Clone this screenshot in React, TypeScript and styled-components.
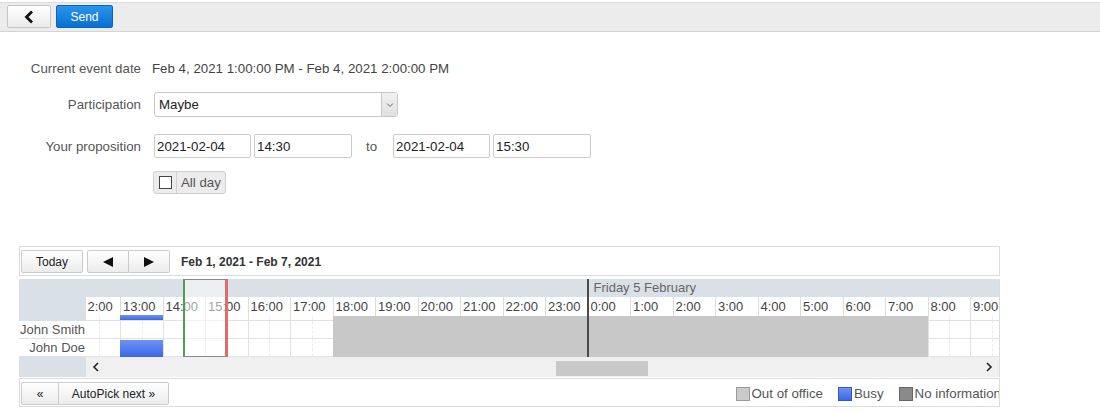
import React from "react";
import styled, { createGlobalStyle } from "styled-components";

const GlobalStyle = createGlobalStyle`
  html, body { margin: 0; padding: 0; background: #fff; }
  body { font-family: "Liberation Sans", Arial, sans-serif; font-size: 13px; color: #333; }
  * { box-sizing: border-box; }
`;

const HOUR_W = 42.5;
const hours = [
  "2:00", "13:00", "14:00", "15:00", "16:00", "17:00", "18:00", "19:00", "20:00", "21:00", "22:00",
  "23:00", "0:00", "1:00", "2:00", "3:00", "4:00", "5:00", "6:00", "7:00", "8:00", "9:00",
];

/* ---------- top bar ---------- */
const TopBar = styled.div`
  margin-top: 2px;
  height: 30px;
  border-top: 1px solid #dcdcdc;
  border-bottom: 1px solid #d4d4d4;
  background: #ececec;
  display: flex;
  align-items: flex-start;
  gap: 5px;
  padding: 2px 7px 0;
`;

const BarButton = styled.button<{ $primary?: boolean; $w: number }>`
  width: ${(p) => p.$w}px;
  height: 23px;
  padding: 0;
  margin: 0;
  display: flex;
  align-items: center;
  justify-content: center;
  font-family: "Liberation Sans", Arial, sans-serif;
  font-size: 12px;
  border-radius: 2px;
  border: 1px solid ${(p) => (p.$primary ? "#0b64bd" : "#c6c6c6")};
  color: ${(p) => (p.$primary ? "#fff" : "#111")};
  background: ${(p) =>
    p.$primary ? "linear-gradient(#2a95ec, #0a6fd2)" : "linear-gradient(#ffffff, #ebebeb)"};
`;

/* ---------- form ---------- */
const Form = styled.div`
  display: flex;
  flex-direction: column;
  font-size: 13.3px;
`;

const FormRow = styled.div<{ $top: number; $h: number }>`
  display: flex;
  align-items: center;
  margin-top: ${(p) => p.$top}px;
  height: ${(p) => p.$h}px;
`;

const Label = styled.div`
  width: 141px;
  text-align: right;
  color: #555;
  margin-right: 13px;
  white-space: nowrap;
`;

const ValueText = styled.div`
  margin-left: -2px;
  color: #444;
`;

const SelectBox = styled.div`
  width: 244px;
  height: 25px;
  border: 1px solid #c8c8c8;
  border-radius: 3px;
  display: flex;
  align-items: stretch;
  background: #fff;
  overflow: hidden;
`;

const SelectText = styled.div`
  flex: 1;
  padding-left: 4px;
  display: flex;
  align-items: center;
  color: #222;
`;

const SelectArrow = styled.div`
  width: 16px;
  border-left: 1px solid #c8c8c8;
  background: linear-gradient(#f0f0f0, #e0e0e0);
  display: flex;
  align-items: center;
  justify-content: center;
`;

const Field = styled.input<{ $w: number }>`
  width: ${(p) => p.$w}px;
  height: 24px;
  border: 1px solid #cccccc;
  border-radius: 2px;
  padding: 0 2px;
  margin: 0 3px 0 0;
  font-family: "Liberation Sans", Arial, sans-serif;
  font-size: 13.3px;
  color: #222;
  outline: none;
`;

const ToWord = styled.span`
  color: #555;
  margin: 0 16px 0 11px;
`;

const CheckButton = styled.div`
  margin-left: -1px;
  width: 73px;
  height: 23px;
  border: 1px solid #cfcfcf;
  border-radius: 3px;
  background: #ececec;
  display: flex;
  align-items: stretch;
`;

const CheckPart = styled.div`
  width: 23px;
  border-right: 1px solid #d2d2d2;
  display: flex;
  align-items: center;
  justify-content: center;
`;

const CheckSquare = styled.div`
  width: 13px;
  height: 13px;
  border: 1px solid #444;
  background: #fff;
`;

const CheckLabel = styled.div`
  padding-left: 4px;
  display: flex;
  align-items: center;
  color: #555;
`;

/* ---------- calendar ---------- */
const Calendar = styled.div`
  margin: 52px 0 0 19px;
  width: 981px;
`;

const CalToolbar = styled.div`
  height: 30px;
  border: 1px solid #dcdcdc;
  display: flex;
  align-items: flex-start;
  padding: 3px 1px 0;
  overflow: hidden;
`;

const ToolButton = styled.div<{ $w: number; $joinLeft?: boolean; $joinRight?: boolean }>`
  width: ${(p) => p.$w}px;
  height: 23px;
  display: flex;
  align-items: center;
  justify-content: center;
  font-size: 12px;
  color: #222;
  border: 1px solid #cbcbcb;
  border-left-width: ${(p) => (p.$joinLeft ? 0 : 1)}px;
  border-radius: ${(p) =>
    p.$joinLeft ? "0 2px 2px 0" : p.$joinRight ? "2px 0 0 2px" : "2px"};
  background: linear-gradient(#ffffff, #ececec);
  flex: none;
`;

const ButtonGroup = styled.div<{ $ml: number }>`
  display: flex;
  margin-left: ${(p) => p.$ml}px;
`;

const RangeTitle = styled.div`
  margin-left: 11px;
  height: 23px;
  display: flex;
  align-items: center;
  font-weight: bold;
  font-size: 12px;
  color: #333;
`;

const Grid = styled.div`
  margin-top: 3px;
  display: grid;
  grid-template-columns: 67px 913px;
  border-right: 1px solid #dcdcdc;
`;

const LeftCol = styled.div`
  display: flex;
  flex-direction: column;
`;

const LeftBlock = styled.div<{ $h: number }>`
  height: ${(p) => p.$h}px;
  background: #d9e0e7;
`;

const NameCell = styled.div`
  height: 18px;
  background: #fff;
  border-bottom: 1px solid #e2e2e2;
  text-align: right;
  padding-right: 1px;
  line-height: 17px;
  color: #555;
  font-size: 13px;
  white-space: nowrap;
`;

const RightCol = styled.div`
  display: flex;
  flex-direction: column;
`;

const Viewport = styled.div`
  height: 78px;
  overflow: hidden;
  position: relative;
`;

const Track = styled.div`
  position: relative;
  width: ${HOUR_W * hours.length}px;
  margin-left: -8.5px;
`;

const DayRow = styled.div`
  display: flex;
  height: 18px;
  background: #d9e0e7;
`;

const DayCell = styled.div<{ $w: number }>`
  width: ${(p) => p.$w}px;
  padding-left: 6px;
  line-height: 18px;
  color: #666;
  font-size: 13px;
  white-space: nowrap;
`;

const HourRow = styled.div`
  display: flex;
  height: 19px;
`;

const HourCell = styled.div<{ $lead?: boolean }>`
  width: ${HOUR_W}px;
  flex: none;
  border-left: 1px solid #dcdcdc;
  padding-left: ${(p) => (p.$lead ? 9 : 2)}px;
  line-height: 19px;
  color: #444;
  font-size: 13px;
  white-space: nowrap;
  overflow: hidden;
  background: #fff;
`;

const SlotRow = styled.div<{ $h: number }>`
  display: flex;
  height: ${(p) => p.$h}px;
  border-bottom: 1px solid #e2e2e2;
`;

const SlotCell = styled.div`
  width: ${HOUR_W}px;
  flex: none;
  border-left: 1px solid #e2e2e2;
  position: relative;
  &::after {
    content: "";
    position: absolute;
    top: 0;
    bottom: 0;
    left: 50%;
    border-left: 1px dashed #ececec;
  }
`;

const Block = styled.div<{ $left: number; $top: number; $w: number; $h: number; $kind: "out" | "busy" }>`
  position: absolute;
  left: ${(p) => p.$left}px;
  top: ${(p) => p.$top}px;
  width: ${(p) => p.$w}px;
  height: ${(p) => p.$h}px;
  background: ${(p) => (p.$kind === "out" ? "#c8c8c8" : "linear-gradient(#6f93f2, #3a67e8)")};
`;

const DayDivider = styled.div<{ $left: number }>`
  position: absolute;
  left: ${(p) => p.$left}px;
  top: 0;
  width: 2px;
  height: 78px;
  background: #4a4a4a;
`;

const Selection = styled.div<{ $left: number; $w: number }>`
  position: absolute;
  left: ${(p) => p.$left}px;
  top: 0;
  width: ${(p) => p.$w}px;
  height: 78px;
  background: rgba(255, 255, 255, 0.5);
  border-left: 2px solid #4f9f4f;
  border-right: 3px solid #e46a6a;
  border-top: 1px solid #8a8a8a;
  border-bottom: 1px solid #8a8a8a;
`;

const ScrollRow = styled.div`
  height: 20px;
  background: #f0f0f0;
  position: relative;
  display: flex;
  align-items: center;
  justify-content: space-between;
  padding: 0 6px 0 6px;
`;

const ScrollThumb = styled.div<{ $left: number; $w: number }>`
  position: absolute;
  top: 4px;
  left: ${(p) => p.$left}px;
  width: ${(p) => p.$w}px;
  height: 15px;
  background: #c8c8c8;
`;

const BottomBar = styled.div`
  margin-top: 1px;
  height: 29px;
  border: 1px solid #dcdcdc;
  display: flex;
  align-items: flex-start;
  padding: 3px 0 0 1px;
  overflow: hidden;
`;

const Legend = styled.div`
  margin-left: auto;
  height: 23px;
  display: flex;
  align-items: center;
  white-space: nowrap;
  margin-right: -2px;
`;

const LegendItem = styled.div`
  display: flex;
  align-items: center;
  margin-left: 15px;
  color: #555;
  font-size: 13.3px;
`;

const Swatch = styled.span<{ $bg: string; $bd: string }>`
  width: 14px;
  height: 14px;
  margin-right: 2px;
  background: ${(p) => p.$bg};
  border: 1px solid ${(p) => p.$bd};
`;

const ChevronLeft = () => (
  <svg width="12" height="14" viewBox="0 0 12 14">
    <path d="M9 1.5 L3.5 7 L9 12.5" fill="none" stroke="#111" strokeWidth="2.8" />
  </svg>
);

const TriLeft = () => (
  <svg width="10" height="10" viewBox="0 0 10 10">
    <path d="M0 5 L10 0 L10 10 Z" fill="#111" />
  </svg>
);
const TriRight = () => (
  <svg width="10" height="10" viewBox="0 0 10 10">
    <path d="M10 5 L0 0 L0 10 Z" fill="#111" />
  </svg>
);

const SmallChevron = ({ dir }: { dir: "left" | "right" | "down" }) => {
  const d =
    dir === "left" ? "M6 1 L2 5 L6 9" : dir === "right" ? "M2 1 L6 5 L2 9" : "M1 2.5 L4 5.5 L7 2.5";
  const vb = dir === "down" ? "0 0 8 8" : "0 0 8 10";
  return (
    <svg width="8" height={dir === "down" ? 8 : 10} viewBox={vb}>
      <path d={d} fill="none" stroke={dir === "down" ? "#666" : "#222"} strokeWidth={dir === "down" ? 1 : 1.6} />
    </svg>
  );
};

export default function App() {
  return (
    <>
      <GlobalStyle />
      <TopBar>
        <BarButton $w={44}>
          <ChevronLeft />
        </BarButton>
        <BarButton $w={57} $primary>
          Send
        </BarButton>
      </TopBar>

      <Form>
        <FormRow $top={24} $h={24}>
          <Label>Current event date</Label>
          <ValueText>Feb 4, 2021 1:00:00 PM - Feb 4, 2021 2:00:00 PM</ValueText>
        </FormRow>
        <FormRow $top={12} $h={25}>
          <Label>Participation</Label>
          <SelectBox>
            <SelectText>Maybe</SelectText>
            <SelectArrow>
              <SmallChevron dir="down" />
            </SelectArrow>
          </SelectBox>
        </FormRow>
        <FormRow $top={17} $h={24}>
          <Label>Your proposition</Label>
          <Field $w={97} defaultValue="2021-02-04" />
          <Field $w={98} defaultValue="14:30" />
          <ToWord>to</ToWord>
          <Field $w={97} defaultValue="2021-02-04" />
          <Field $w={98} defaultValue="15:30" />
        </FormRow>
        <FormRow $top={13} $h={23}>
          <Label />
          <CheckButton>
            <CheckPart>
              <CheckSquare />
            </CheckPart>
            <CheckLabel>All day</CheckLabel>
          </CheckButton>
        </FormRow>
      </Form>

      <Calendar>
        <CalToolbar>
          <ToolButton $w={62}>Today</ToolButton>
          <ButtonGroup $ml={4}>
            <ToolButton $w={42} $joinRight>
              <TriLeft />
            </ToolButton>
            <ToolButton $w={41} $joinLeft>
              <TriRight />
            </ToolButton>
          </ButtonGroup>
          <RangeTitle>Feb 1, 2021 - Feb 7, 2021</RangeTitle>
        </CalToolbar>

        <Grid>
          <LeftCol>
            <LeftBlock $h={42} />
            <NameCell>John Smith</NameCell>
            <NameCell>John Doe</NameCell>
            <LeftBlock $h={20} />
          </LeftCol>
          <RightCol>
            <Viewport>
              <Track>
                <DayRow>
                  <DayCell $w={HOUR_W * 12} />
                  <DayCell $w={HOUR_W * 10}>Friday 5 February</DayCell>
                </DayRow>
                <HourRow>
                  {hours.map((h, i) => (
                    <HourCell key={i} $lead={i === 0}>
                      {h}
                    </HourCell>
                  ))}
                </HourRow>
                <SlotRow $h={5}>
                  {hours.map((h, i) => (
                    <SlotCell key={i} />
                  ))}
                </SlotRow>
                <SlotRow $h={18}>
                  {hours.map((h, i) => (
                    <SlotCell key={i} />
                  ))}
                </SlotRow>
                <SlotRow $h={18}>
                  {hours.map((h, i) => (
                    <SlotCell key={i} />
                  ))}
                </SlotRow>
                <Block $kind="out" $left={HOUR_W * 6} $top={37} $w={HOUR_W * 14} $h={41} />
                <Block $kind="busy" $left={HOUR_W * 1} $top={36} $w={HOUR_W} $h={5} />
                <Block $kind="busy" $left={HOUR_W * 1} $top={61} $w={HOUR_W} $h={17} />
                <DayDivider $left={509} />
                <Selection $left={105.5} $w={45} />
              </Track>
            </Viewport>
            <ScrollRow>
              <SmallChevron dir="left" />
              <ScrollThumb $left={470} $w={92} />
              <SmallChevron dir="right" />
            </ScrollRow>
          </RightCol>
        </Grid>

        <BottomBar>
          <ToolButton $w={38} $joinRight>
            «
          </ToolButton>
          <ToolButton $w={110} $joinLeft>
            AutoPick next »
          </ToolButton>
          <Legend>
            <LegendItem>
              <Swatch $bg="#cacaca" $bd="#9a9a9a" />
              Out of office
            </LegendItem>
            <LegendItem>
              <Swatch $bg="linear-gradient(#6f93f2, #3a67e8)" $bd="#3358c8" />
              Busy
            </LegendItem>
            <LegendItem>
              <Swatch $bg="#8a8a8a" $bd="#666" />
              No information
            </LegendItem>
          </Legend>
        </BottomBar>
      </Calendar>
    </>
  );
}
